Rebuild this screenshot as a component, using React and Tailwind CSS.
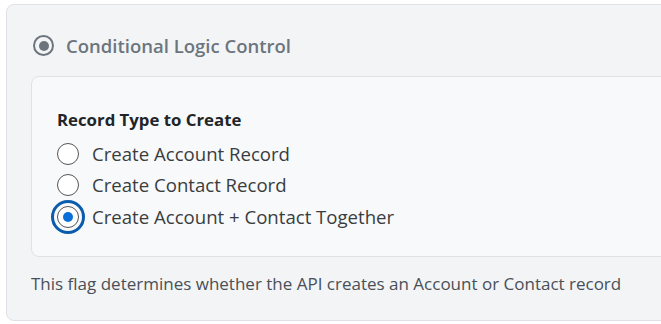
import React from 'react';

const options = [
  { label: 'Create Account Record', checked: false },
  { label: 'Create Contact Record', checked: false },
  { label: 'Create Account + Contact Together', checked: true },
];

const Radio = ({ checked }) => {
  if (checked) {
    return (
      <span className="flex h-[34px] w-[34px] items-center justify-center rounded-full border-[3px] border-[#0b5cad]">
        <span className="flex h-[22px] w-[22px] items-center justify-center rounded-full border border-[#555] bg-white">
          <span className="h-[10px] w-[10px] rounded-full bg-[#0a6fd8]" />
        </span>
      </span>
    );
  }
  return (
    <span className="flex h-[34px] w-[34px] items-center justify-center">
      <span className="h-[22px] w-[22px] rounded-full border border-[#555] bg-white" />
    </span>
  );
};

export default function App() {
  return (
    <div
      className="h-[324px] w-[661px] overflow-hidden bg-white pl-[6px] pt-[4px]"
      style={{ fontFamily: '"Open Sans", "Noto Sans", sans-serif' }}
    >
      <div className="h-[317px] w-[720px] rounded-lg border border-[#dee2e6] bg-[#f3f4f6]">
        {/* Header */}
        <div className="flex h-[71px] items-center gap-[12px] pl-[26px] pt-[10px]">
          <span className="flex h-[21px] w-[21px] items-center justify-center rounded-full border-[2.5px] border-[#6c757d]">
            <span className="h-[10px] w-[10px] rounded-full bg-[#6c757d]" />
          </span>
          <span className="text-[18.5px] font-semibold text-[#6c757d]">Conditional Logic Control</span>
        </div>

        {/* Options card */}
        <div className="ml-[24px] h-[181px] rounded-lg border border-[#dee2e6] bg-[#f8f9fa] pl-[19px] pt-[31px]">
          <div className="mb-[6px] ml-[6px] text-[16.8px] font-bold leading-[24px] text-[#212529]">Record Type to Create</div>
          <div className="flex flex-col">
            {options.map((opt) => (
              <label key={opt.label} className="flex h-[31.5px] items-center gap-[7px]">
                <Radio checked={opt.checked} />
                <span className="text-[18.6px] text-[#3a3d40]">{opt.label}</span>
              </label>
            ))}
          </div>
        </div>

        {/* Help text */}
        <p className="mt-[14px] pl-[24px] text-[17px] text-[#495057]">
          This flag determines whether the API creates an Account or Contact record
        </p>
      </div>
    </div>
  );
}
